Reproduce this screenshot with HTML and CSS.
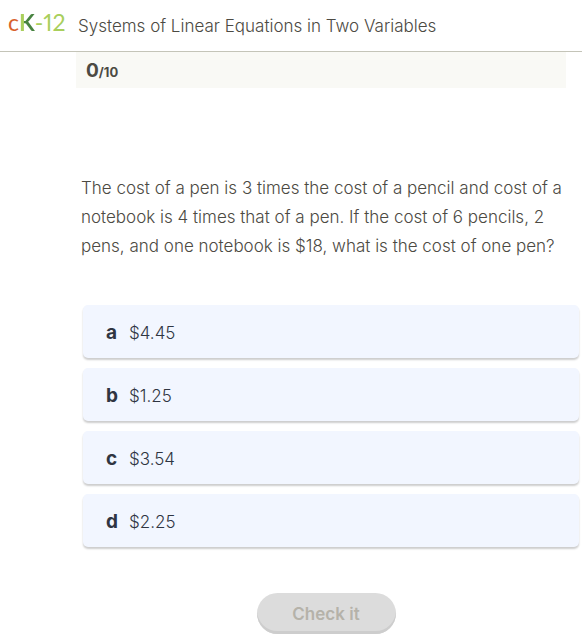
FILE: index.html
```html
<!DOCTYPE html>
<html lang="en">
<head>
<meta charset="utf-8">
<title>Systems of Linear Equations in Two Variables</title>
<link rel="stylesheet" href="styles.css">
</head>
<body>
<header class="header">
  <a class="logo" href="#"><span class="logo-c">c</span><span class="logo-k">K</span><span class="logo-num">-12</span></a>
  <h1 class="title">Systems of Linear Equations in Two Variables</h1>
</header>
<main class="practice">
  <div class="score"><span class="score-points">0</span><span class="score-total">/10</span></div>
  <p class="question">The cost of a pen is 3 times the cost of a pencil and cost of a notebook is 4 times that of a pen. If the cost of 6 pencils, 2 pens, and one notebook is $18, what is the cost of one pen?</p>
  <div class="options">
    <button class="option" type="button"><span class="letter">a</span><span>$4.45</span></button>
    <button class="option" type="button"><span class="letter">b</span><span>$1.25</span></button>
    <button class="option" type="button"><span class="letter">c</span><span>$3.54</span></button>
    <button class="option" type="button"><span class="letter">d</span><span>$2.25</span></button>
  </div>
  <button class="check" type="button" disabled>Check it</button>
</main>
</body>
</html>
```
FILE: styles.css
```css
* {
  box-sizing: border-box;
}

body {
  margin: 0;
  background: #fff;
  color: #4c4a43;
  font-family: Inter, "Open Sans", sans-serif;
  font-weight: 300;
}

.header {
  display: flex;
  align-items: center;
  gap: 12px;
  height: 52px;
  padding: 0 8px;
  border-bottom: 1px solid #c4c4b8;
}

.logo {
  display: flex;
  width: 58px;
  padding-bottom: 8px;
  color: #a9cf5c;
  font-family: Lato, sans-serif;
  font-size: 23px;
  font-variant-numeric: proportional-nums;
  font-weight: 400;
  line-height: 36px;
  text-decoration: none;
}

.logo-c {
  color: #d9622b;
}

.logo-k {
  background: linear-gradient(90deg, #a9cf5c 5px, #478340 5px);
  background-clip: text;
  color: transparent;
  font-weight: 700;
}

.title {
  margin: 0;
  font-size: 17px;
  font-weight: 300;
  line-height: 24px;
}

.practice {
  display: flex;
  flex-direction: column;
  padding: 0 3px 0 76px;
}

.score {
  height: 36px;
  margin-right: 13px;
  padding-left: 10px;
  background: #f9f9f5;
  font-weight: 700;
  line-height: 38px;
}

.score-points {
  font-size: 19px;
}

.score-total {
  font-size: 13px;
}

.question {
  margin: 86px 0 44px 5px;
  padding-right: 14px;
  font-size: 17px;
  line-height: 29px;
}

.options {
  display: grid;
  gap: 10px;
  margin-left: 7px;
}

.option {
  display: flex;
  align-items: center;
  height: 53px;
  padding: 2px 23px 0;
  border: 0;
  border-radius: 5px;
  background: #f2f6ff;
  box-shadow: 0 2px 2px rgba(0, 0, 0, 0.2);
  color: #2f3542;
  font: 300 17px Inter, "Open Sans", sans-serif;
  text-align: left;
}

.letter {
  width: 23px;
  font-size: 19px;
  font-weight: 700;
}

.check {
  align-self: center;
  width: 139px;
  height: 41px;
  margin-top: 46px;
  margin-right: 3px;
  border: 0;
  border-radius: 21px;
  background: #dcdcdc;
  box-shadow: inset 0 -3px #cdcdcd;
  color: #b5b2a9;
  font: 600 17px Inter, "Open Sans", sans-serif;
}
```
